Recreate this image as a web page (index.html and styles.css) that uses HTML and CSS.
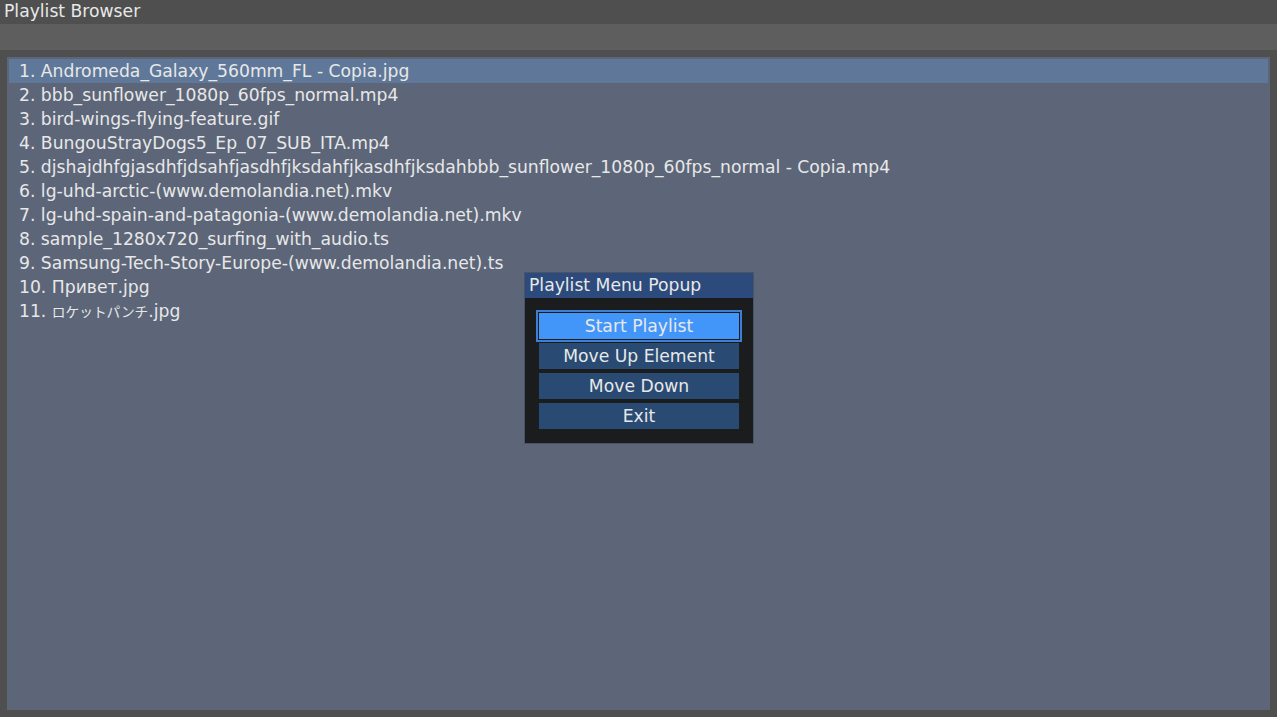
FILE: index.html
```html
<!DOCTYPE html>
<html lang="en">
<head>
    <meta charset="UTF-8">
    <title>Playlist Browser</title>
    <link rel="stylesheet" href="styles.css">
</head>
<body>
    <div class="window">
        <div class="titlebar">Playlist Browser</div>
        <div class="toolbar"></div>
        <div class="content">
            <ul class="playlist">
                <li class="selected">1. Andromeda_Galaxy_560mm_FL - Copia.jpg</li>
                <li>2. bbb_sunflower_1080p_60fps_normal.mp4</li>
                <li>3. bird-wings-flying-feature.gif</li>
                <li>4. BungouStrayDogs5_Ep_07_SUB_ITA.mp4</li>
                <li>5. djshajdhfgjasdhfjdsahfjasdhfjksdahfjkasdhfjksdahbbb_sunflower_1080p_60fps_normal - Copia.mp4</li>
                <li>6. lg-uhd-arctic-(www.demolandia.net).mkv</li>
                <li>7. lg-uhd-spain-and-patagonia-(www.demolandia.net).mkv</li>
                <li>8. sample_1280x720_surfing_with_audio.ts</li>
                <li>9. Samsung-Tech-Story-Europe-(www.demolandia.net).ts</li>
                <li>10. Привет.jpg</li>
                <li>11. <span class="cjk">ロケットパンチ</span>.jpg</li>
            </ul>
        </div>
    </div>

    <div class="popup">
        <div class="popup-title">Playlist Menu Popup</div>
        <div class="popup-body">
            <button class="focused">Start Playlist</button>
            <button>Move Up Element</button>
            <button>Move Down</button>
            <button>Exit</button>
        </div>
    </div>
</body>
</html>
```

FILE: styles.css
```css
html, body {
    margin: 0;
    height: 100%;
}
body {
    font-family: "DejaVu Sans", "Noto Sans CJK JP", sans-serif;
    font-size: 17.2px;
    color: #e8e8e8;
    background-color: #4f4f4f;
    overflow: hidden;
}
.window {
    display: flex;
    flex-direction: column;
    height: 100%;
}
.titlebar {
    height: 24px;
    line-height: 22px;
    padding-left: 4px;
    background-color: #4f4f4f;
}
.toolbar {
    height: 26px;
    background-color: #5e5e5e;
}
.content {
    flex: 1;
    padding: 7px;
    display: flex;
}
.playlist {
    flex: 1;
    list-style: none;
    margin: 0;
    padding: 2px;
    background-color: #5c6678;
}
.playlist li {
    height: 24px;
    line-height: 24px;
    padding-left: 10px;
    white-space: nowrap;
}
.playlist li.selected {
    background-color: #5f7899;
}
.cjk {
    font-family: "Noto Sans CJK JP", sans-serif;
    font-size: 13.7px;
}
.popup {
    position: absolute;
    left: 524px;
    top: 272px;
    width: 228px;
    border: 1px solid #4a5466;
    background-color: #1b1c1e;
}
.popup-title {
    height: 25px;
    line-height: 25px;
    padding-left: 4px;
    background-color: #2c4a7b;
}
.popup-body {
    display: flex;
    flex-direction: column;
    align-items: center;
    gap: 4px;
    padding: 15px 0 14px;
}
.popup-body button {
    width: 200px;
    height: 26px;
    border: none;
    padding: 0;
    font-family: inherit;
    font-size: inherit;
    color: #e8e8e8;
    background-color: #284a73;
}
.popup-body button.focused {
    background-color: #4296fa;
    box-shadow: 0 0 0 1px #1b1c1e, 0 0 0 3px #3d7fd0;
}
```
